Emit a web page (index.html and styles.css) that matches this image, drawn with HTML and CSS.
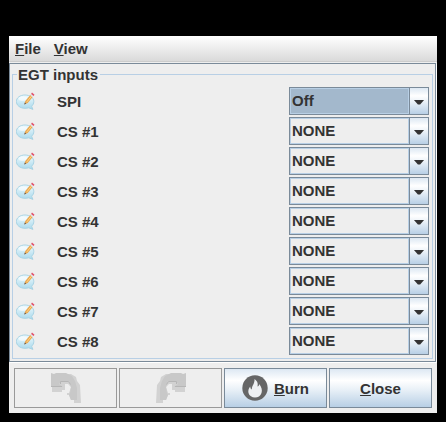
FILE: index.html
```
<!DOCTYPE html>
<html lang="en">
<head>
<meta charset="utf-8">
<title>EGT inputs</title>
<link rel="stylesheet" href="styles.css">
</head>
<body>
<svg class="defs" aria-hidden="true">
  <defs>
    <linearGradient id="bubble" x1="0" y1="0" x2="0" y2="1"><stop offset="0" stop-color="#eef9fd"/><stop offset="1" stop-color="#a9d9ec"/></linearGradient>
    <symbol id="note" viewBox="0 0 20 18">
      <path d="M9 3C14 3 17.800 5.800 17.800 9.500c0 2-.8 3.500-2.200 4.700l1.300 3.200-4.300-1.600c-1.100.4-2.300.5-3.600.5C4 16.300.4 13.300.4 9.500S4 3 9 3z" fill="url(#bubble)" stroke="#a3d0e2" stroke-width=".9"/>
      <ellipse cx="7" cy="6.700" rx="4.500" ry="2.200" fill="#fff" opacity=".6"/>
      <path d="M8.300 12.500l1-3.600 5.200-6.200 2.400 2.100-5.200 6.200z" fill="#eba750"/>
      <path d="M10.600 10.200l5-6.100" stroke="#ffdc91" stroke-width=".9"/>
      <path d="M8.300 12.500l.5-1.900 1.400 1.100z" fill="#555"/>
      <path d="M14.100 3.100l1-1.200 2.400 2.100-1 1.200z" fill="#dce5eb"/>
      <path d="M15.100 1.900l.9-1.300 2.500 2.200-.9 1.100z" fill="#e2506a"/>
    </symbol>
    <symbol id="turn" viewBox="0 0 30 30">
      <path d="M15 1h5l5 3 1 4 3 4 1 18h-7v-3h-3l-2-5h-2v-2h2l2-6-3-3h-3v6h-3v2H1v-5z" fill="#d2d2d2"/>
      <path d="M0 0l3 1 2-1h10l6 3 3 5 2 7v12h-6l-2-5 1-2 1-6-2-6h-8l-2 3 4 3H0z" fill="#c8c8c8"/>
      <path d="M0 13.500h11M9.500 11V8.500h8l2 3" fill="none" stroke="#b6b6b6"/>
    </symbol>
  </defs>
</svg>
<main class="window">
  <nav class="menu"><span><u>F</u>ile</span><span><u>V</u>iew</span></nav>
  <section class="panel">
    <div class="group">
      <h1 class="title">EGT inputs</h1>
      <div class="row"><svg class="note"><use href="#note"/></svg><span class="label">SPI</span><div class="combo selected"><span class="value">Off</span><span class="arrow"></span></div></div>
      <div class="row"><svg class="note"><use href="#note"/></svg><span class="label">CS #1</span><div class="combo"><span class="value">NONE</span><span class="arrow"></span></div></div>
      <div class="row"><svg class="note"><use href="#note"/></svg><span class="label">CS #2</span><div class="combo"><span class="value">NONE</span><span class="arrow"></span></div></div>
      <div class="row"><svg class="note"><use href="#note"/></svg><span class="label">CS #3</span><div class="combo"><span class="value">NONE</span><span class="arrow"></span></div></div>
      <div class="row"><svg class="note"><use href="#note"/></svg><span class="label">CS #4</span><div class="combo"><span class="value">NONE</span><span class="arrow"></span></div></div>
      <div class="row"><svg class="note"><use href="#note"/></svg><span class="label">CS #5</span><div class="combo"><span class="value">NONE</span><span class="arrow"></span></div></div>
      <div class="row"><svg class="note"><use href="#note"/></svg><span class="label">CS #6</span><div class="combo"><span class="value">NONE</span><span class="arrow"></span></div></div>
      <div class="row"><svg class="note"><use href="#note"/></svg><span class="label">CS #7</span><div class="combo"><span class="value">NONE</span><span class="arrow"></span></div></div>
      <div class="row"><svg class="note"><use href="#note"/></svg><span class="label">CS #8</span><div class="combo"><span class="value">NONE</span><span class="arrow"></span></div></div>
    </div>
  </section>
  <footer class="actions">
    <button class="button disabled" disabled aria-label="Undo"><svg class="turn"><use href="#turn"/></svg></button>
    <button class="button disabled" disabled aria-label="Redo"><svg class="turn redo"><use href="#turn"/></svg></button>
    <button class="button"><svg class="flame" viewBox="0 0 26 26"><circle cx="13" cy="13" r="12.700" fill="#666"/><path d="M12.500 4c3.500 2.500 3.500 5 3 7.500 1 0 1.700-1 1.700-2.500 2.300 3 3.300 6 2.300 9C18.500 21 16 22.500 13 22.500s-5.700-1.700-6.500-4.500c-.6-2.500.2-4.700 1.700-6.500.1 1.500.6 2.500 1.700 3C9.500 11 13 8.500 12.500 4z" fill="#eef0f2"/></svg><span><u>B</u>urn</span></button>
    <button class="button"><span><u>C</u>lose</span></button>
  </footer>
</main>
</body>
</html>
```
FILE: styles.css
```
* { box-sizing: border-box; }
body {
  margin: 0;
  padding: 36px 9px 9px;
  height: 422px;
  overflow: hidden;
  background: #000;
  color: #333;
  font: bold 15px/18px "Liberation Sans", Arial, sans-serif;
}
.defs { position: absolute; width: 0; height: 0; }
u { text-decoration: underline 1px; text-underline-offset: 1px; text-decoration-skip-ink: none; }
.window { width: 428px; height: 377px; background: #eee; }
.menu {
  display: flex;
  gap: 13px;
  height: 26px;
  padding: 4px 6px;
  background: linear-gradient(#fff, #dadada);
  border-bottom: 1px solid #ccc;
}
.panel {
  width: 427px;
  height: 299px;
  margin-top: 1px;
  padding: 10px 2px 3px;
  border: 1px solid #7a8a99;
  box-shadow: 1px 1px #fff;
}
.group {
  height: 285px;
  width: 421px;
  border: 1px solid #b8cfe5;
}
.title {
  width: max-content;
  height: 18px;
  margin: -9px 0 3px 4px;
  padding: 0 2px 0 1px;
  background: #eee;
  font: inherit;
}
.row { display: flex; height: 28px; margin-bottom: 2px; padding-left: 3px; }
.note { width: 20px; height: 18px; margin-top: 5px; }
.label { width: 232px; margin: 6px 0 0 21px; }
.combo {
  display: flex;
  width: 140px;
  height: 28px;
  border: 1px solid #7a8a99;
  background: #eee;
}
.value { width: 119px; padding: 3px 0 0 1px; border: 1px solid #b8cfe5; }
.selected .value { background: #a3b8cc; }
.arrow {
  display: grid;
  place-items: center;
  flex: 1;
  border-left: 1px solid #7a8a99;
  background: linear-gradient(#dde8f3, #fff 30%, #e8f0f7 55%, #b8cfe5);
}
.arrow::before {
  content: "";
  width: 11px;
  height: 5px;
  margin-top: 2px;
  background: #333;
  clip-path: polygon(0 0, 100% 0, 60% 100%, 40% 100%);
}
.actions { display: flex; gap: 2px; padding: 6px 5px; }
.button {
  display: flex;
  align-items: center;
  justify-content: center;
  gap: 6px;
  width: 103px;
  height: 40px;
  padding: 0;
  border: 1px solid #7a8a99;
  border-radius: 0;
  background: linear-gradient(#dde8f3, #fff 30%, #e8f0f7 55%, #b8cfe5);
  color: #333;
  font: inherit;
}
.button span { margin-top: 1px; }
.disabled { border-color: #999; background: #eee; }
.turn { width: 30px; height: 30px; }
.redo { transform: scaleX(-1); }
.flame { width: 26px; height: 26px; }
```
